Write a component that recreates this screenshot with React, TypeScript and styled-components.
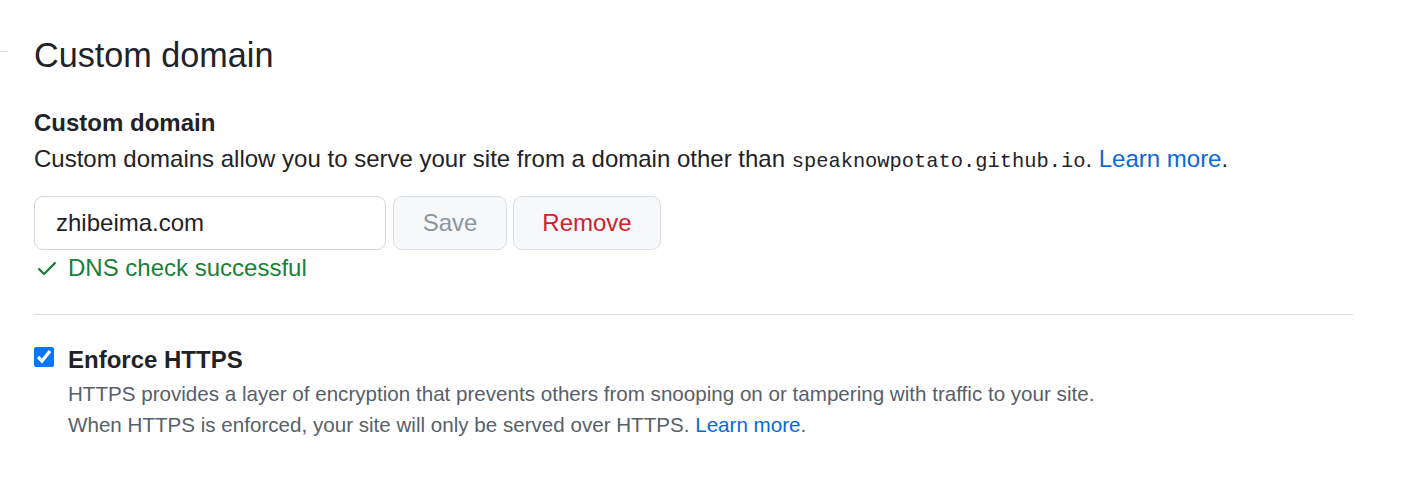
import React from "react";
import styled, { createGlobalStyle } from "styled-components";

const Global = createGlobalStyle`
  html, body { margin: 0; padding: 0; background: #ffffff; }
  body { font-family: "Liberation Sans", Arial, sans-serif; color: #1f2328; }
`;

const Page = styled.div`
  display: flex;
  width: 1422px;
  min-height: 489px;
`;

const SideEdge = styled.div`
  width: 8px;
  flex: none;
  padding-top: 51px;
  &::before {
    content: "";
    display: block;
    height: 1px;
    background: #d8dee4;
  }
`;

const Main = styled.main`
  width: 1319px;
  margin-left: 26px;
  padding-top: 34px;
`;

const Title = styled.h2`
  margin: 0;
  font-size: 34.2px;
  font-weight: 400;
  line-height: 42px;
  color: #1f2328;
`;

const Section = styled.div`
  padding-top: 29px;
`;

const Label = styled.h3`
  margin: 0;
  font-size: 24px;
  font-weight: 700;
  line-height: 36px;
`;

const Text = styled.p`
  margin: 0;
  font-size: 24px;
  line-height: 36px;
`;

const Mono = styled.code`
  font-family: "Liberation Mono", monospace;
  font-size: 20.4px;
  line-height: 1;
`;

const Link = styled.a`
  color: #0969da;
  text-decoration: none;
`;

const FormRow = styled.div`
  display: flex;
  gap: 7px;
  margin-top: 19px;
`;

const Input = styled.input`
  box-sizing: border-box;
  width: 352px;
  height: 54px;
  padding: 0 21px;
  border: 1px solid #d0d7de;
  border-radius: 9px;
  font-family: "Liberation Sans", Arial, sans-serif;
  font-size: 24px;
  color: #1f2328;
  background: #ffffff;
  outline: none;
`;

const Button = styled.button<{ $tone?: "muted" | "danger" }>`
  box-sizing: border-box;
  height: 54px;
  width: ${(p) => (p.$tone === "danger" ? "148px" : "114px")};
  border: 1px solid #d8dee4;
  border-radius: 9px;
  background: #f6f8fa;
  font-family: "Liberation Sans", Arial, sans-serif;
  font-size: 24px;
  color: ${(p) => (p.$tone === "danger" ? "#cf222e" : "#8c959f")};
  cursor: pointer;
  & + & { margin-left: -1px; }
`;

const Status = styled.div`
  display: flex;
  align-items: center;
  gap: 9px;
  font-size: 24px;
  line-height: 36px;
  color: #1a7f37;
  svg { flex: none; margin-left: 1px; }
`;

const Divider = styled.hr`
  margin: 28px 0 0;
  border: 0;
  height: 1px;
  background: #d8dee4;
`;

const CheckRow = styled.div`
  display: flex;
  gap: 14px;
  margin-top: 31px;
`;

const Check = styled.input`
  width: 20px;
  height: 20px;
  margin: 1px 0 0;
  accent-color: #0a75ff;
  flex: none;
`;

const CheckBody = styled.div`
  display: flex;
  flex-direction: column;
`;

const CheckLabel = styled.label`
  font-size: 24px;
  font-weight: 700;
  line-height: 28px;
  color: #1f2328;
`;

const Note = styled.p`
  margin: 4px 0 0;
  font-size: 20.6px;
  line-height: 31px;
  color: #57606a;
`;

export default function App() {
  return (
    <>
      <Global />
      <Page>
        <SideEdge />
        <Main>
          <Title>Custom domain</Title>
          <Section>
            <Label>Custom domain</Label>
            <Text>
              Custom domains allow you to serve your site from a domain other than{" "}
              <Mono>speaknowpotato.github.io</Mono>. <Link href="#">Learn more</Link>.
            </Text>
            <FormRow>
              <Input defaultValue="zhibeima.com" />
              <Button $tone="muted">Save</Button>
              <Button $tone="danger">Remove</Button>
            </FormRow>
            <Status>
              <svg width="24" height="24" viewBox="0 0 16 16" fill="#1a7f37">
                <path d="M13.78 4.22a.75.75 0 0 1 0 1.06l-7.25 7.25a.75.75 0 0 1-1.06 0L2.22 9.28a.751.751 0 0 1 .018-1.042.751.751 0 0 1 1.042-.018L6 10.94l6.72-6.72a.75.75 0 0 1 1.06 0Z" />
              </svg>
              DNS check successful
            </Status>
          </Section>
          <Divider />
          <CheckRow>
            <Check type="checkbox" id="https" defaultChecked />
            <CheckBody>
              <CheckLabel htmlFor="https">Enforce HTTPS</CheckLabel>
              <Note>
                HTTPS provides a layer of encryption that prevents others from snooping on or tampering with traffic to your site.
                <br />
                When HTTPS is enforced, your site will only be served over HTTPS. <Link href="#">Learn more</Link>.
              </Note>
            </CheckBody>
          </CheckRow>
        </Main>
      </Page>
    </>
  );
}
